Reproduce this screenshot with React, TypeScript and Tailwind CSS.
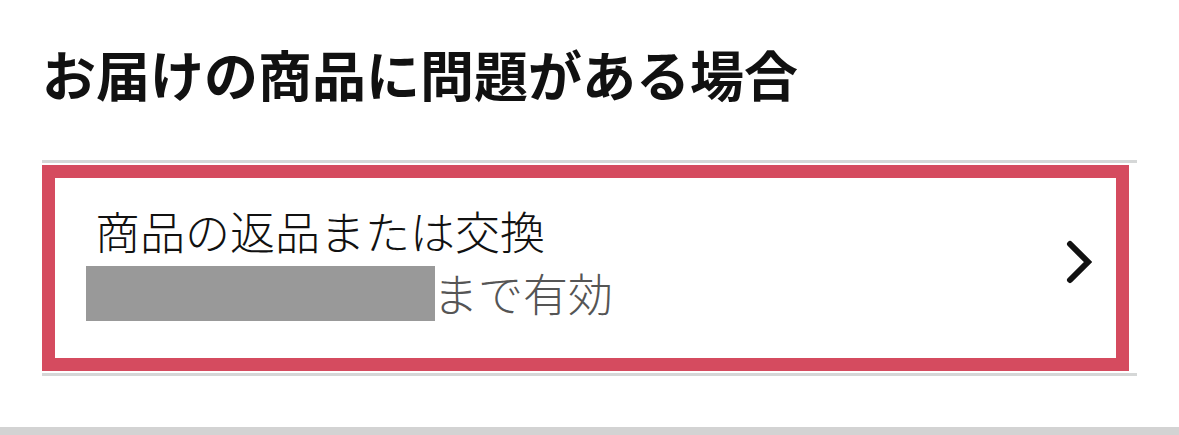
import React from "react";

export default function App() {
  return (
    <div
      className="w-[1179px] h-[435px] bg-white flex flex-col overflow-hidden"
      style={{ fontFamily: '"Noto Sans CJK JP", "Noto Sans", sans-serif' }}
    >
      <div className="px-[42px] pt-[41px] h-[160px]">
        <h1 className="text-[54px] leading-[66px] font-bold text-[#111111]">
          お届けの商品に問題がある場合
        </h1>
      </div>
      <div className="mx-[42px] border-y-[3px] border-[#d5d7d7] py-[2px] pr-[8px]">
        <div className="h-[206px] border-[13px] border-[#d54b5f] flex items-center justify-between pl-[40px] pr-[24px]">
          <div className="flex flex-col pb-[12px]">
            <div className="text-[45px] leading-[56px] font-light text-[#111111]">
              商品の返品または交換
            </div>
            <div className="flex items-center h-[56px] mt-[6px]">
              <span className="inline-block w-[349px] h-[55px] bg-[#999999] -ml-[9px]" />
              <span className="text-[45px] leading-[56px] font-light text-[#555555] -ml-[2px]">
                まで有効
              </span>
            </div>
          </div>
          <svg width="26" height="44" viewBox="0 0 26 44" className="mt-[-13px]">
            <polyline
              points="4,4 22,22 4,40"
              fill="none"
              stroke="#111111"
              strokeWidth="6"
              strokeLinecap="round"
              strokeLinejoin="miter"
            />
          </svg>
        </div>
      </div>
      <div className="flex-1" />
      <div className="h-[8px] bg-[#d3d3d3]" />
    </div>
  );
}
